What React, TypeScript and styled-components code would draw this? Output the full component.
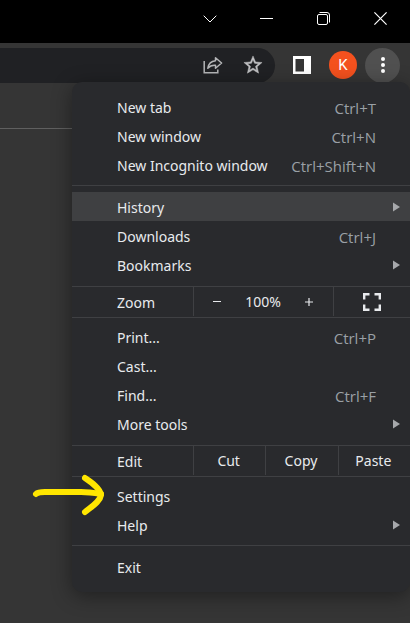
import React from "react";
import styled, { createGlobalStyle } from "styled-components";

const line = "#3f4043";

const Global = createGlobalStyle`
  *, *::before, *::after { box-sizing: border-box; }
  html, body, #root { height: 100%; }
  body {
    margin: 0;
    overflow: hidden;
    background: #353535;
    color: #e8eaed;
    font-family: "Noto Sans", "Open Sans", sans-serif;
    font-size: 14px;
  }
  button {
    margin: 0;
    padding: 0;
    border: 0;
    background: none;
    color: inherit;
    font: inherit;
  }
  svg { display: block; }
`;

const Window = styled.div`
  position: relative;
  min-height: 100%;
  overflow: hidden;
`;

const TitleBar = styled.header`
  display: flex;
  justify-content: flex-end;
  height: 43px;
  padding: 0 1px 6px 0;
  background: #000;
`;

const CaptionButton = styled.button`
  display: grid;
  place-items: center;
  width: 57px;
  color: #fff;
`;

const Toolbar = styled.div`
  display: flex;
  align-items: center;
  height: 44px;
  padding-right: 10px;
`;

const AddressBar = styled.div`
  display: flex;
  flex: 1;
  align-items: center;
  justify-content: flex-end;
  gap: 20px;
  height: 35px;
  padding-right: 12px;
  border-radius: 0 18px 18px 0;
  background: #202124;
`;

const ToolButton = styled.button`
  display: grid;
  place-items: center;
  width: 20px;
  height: 20px;
`;

const PanelButton = styled(ToolButton)`
  margin-left: 17px;
`;

const Avatar = styled.button`
  width: 28px;
  height: 28px;
  margin: 0 8px 0 17px;
  border-radius: 50%;
  background: #f4511e;
  color: #fff;
  font-family: Roboto, sans-serif;
  font-size: 15px;
`;

const MenuButton = styled.button`
  display: grid;
  place-items: center;
  width: 35px;
  height: 35px;
  border-radius: 50%;
  background: #505050;
`;

const PageRule = styled.hr`
  height: 1px;
  margin: 41px 0 0;
  border: 0;
  background: #606060;
`;

const Menu = styled.nav`
  position: absolute;
  top: 82px;
  right: 0;
  left: 72px;
  padding: 10px 0 11px;
  border-radius: 10px;
  background: #292a2d;
  box-shadow: 0 4px 20px rgba(0, 0, 0, 0.4);
`;

const Group = styled.div<{ $top?: number; $bottom?: number }>`
  padding: ${({ $top = 0, $bottom = 0 }) => `${$top}px 0 ${$bottom}px`};
  & + & { border-top: 1px solid ${line}; }
`;

const Item = styled.button<{ $active?: boolean }>`
  display: flex;
  align-items: center;
  justify-content: space-between;
  width: 100%;
  height: 29px;
  padding: 0 10px 0 45px;
  background: ${({ $active }) => ($active ? "#3f4042" : "transparent")};
  text-align: left;
  line-height: 20px;
  white-space: nowrap;
`;

const ItemLabel = styled.span`
  padding-top: 2px;
`;

const Shortcut = styled.span`
  margin-right: 24px;
  padding-top: 2px;
  color: #9aa0a6;
  font-family: "Open Sans", "Noto Sans", sans-serif;
  font-size: 15px;
`;

const SplitRow = styled.div`
  display: flex;
  height: 30px;
`;

const RowLabel = styled.span`
  width: 121px;
  padding-left: 45px;
  line-height: 31px;
`;

const Cell = styled.button`
  flex: 1 0 auto;
  width: 72px;
  height: 29px;
  padding-right: 2px;
  border-left: 1px solid ${line};
`;

const ZoomControls = styled.div`
  display: flex;
  flex: 1;
  align-items: center;
  justify-content: space-between;
  height: 29px;
  padding: 0 18px 0 17px;
  border-left: 1px solid ${line};
`;

const StepButton = styled.button`
  display: grid;
  place-items: center;
  width: 12px;
  height: 29px;
`;

const FullscreenButton = styled.button`
  display: grid;
  place-items: center;
  width: 77px;
  height: 29px;
  border-left: 1px solid ${line};
`;

const Pointer = styled.svg`
  position: absolute;
  top: 472px;
  left: 30px;
`;

type Entry = { label: string; keys?: string; submenu?: boolean; active?: boolean };

const Arrow = () => (
  <svg width="8" height="10" viewBox="0 0 8 10" aria-hidden="true">
    <path d="M1 0.5v9L8 5z" fill="#a6a8ab" />
  </svg>
);

const Items = ({ entries }: { entries: Entry[] }) => (
  <>
    {entries.map(({ label, keys, submenu, active }) => (
      <Item key={label} $active={active} aria-haspopup={submenu ? "menu" : undefined}>
        <ItemLabel>{label}</ItemLabel>
        {keys && <Shortcut>{keys}</Shortcut>}
        {submenu && <Arrow />}
      </Item>
    ))}
  </>
);

export default function App() {
  return (
    <>
      <Global />
      <Window>
        <TitleBar>
          <CaptionButton aria-label="Search tabs">
            <svg width="14" height="8" viewBox="0 0 14 8" fill="none" stroke="currentColor">
              <path d="M0.7 0.7 7 7l6.3-6.3" />
            </svg>
          </CaptionButton>
          <CaptionButton aria-label="Minimize">
            <svg width="13" height="1" viewBox="0 0 13 1">
              <path d="M0 0h13v1H0z" fill="currentColor" />
            </svg>
          </CaptionButton>
          <CaptionButton aria-label="Restore">
            <svg width="13" height="13" viewBox="0 0 13 13" fill="none" stroke="currentColor">
              <rect x="0.5" y="2.5" width="10" height="10" rx="1.5" />
              <path d="M2.5 0.5h7.5a2.5 2.5 0 0 1 2.5 2.5v7.5" />
            </svg>
          </CaptionButton>
          <CaptionButton aria-label="Close">
            <svg width="13" height="13" viewBox="0 0 13 13" stroke="currentColor" strokeWidth="1.2">
              <path d="m0.4 0.4 12.2 12.2M12.6 0.4 0.4 12.6" />
            </svg>
          </CaptionButton>
        </TitleBar>

        <Toolbar>
          <AddressBar>
            <ToolButton aria-label="Share">
              <svg width="20" height="18" viewBox="0 0 20 18" fill="none" stroke="#b4b5b7" strokeWidth="1.5">
                <path d="M1.2 5v11.8h13.6V13.5" />
                <path d="M12.5 1.8 18.6 7l-6.1 5.2V9.3C9 9 6.8 10 4.8 12.3 5.500 8 8 5.200 12.5 4.800z" strokeLinejoin="round" />
              </svg>
            </ToolButton>
            <ToolButton aria-label="Bookmark this tab">
              <svg width="20" height="20" viewBox="1 1 22 22" fill="#c0c1c3" stroke="#c0c1c3" strokeWidth="0.5">
                <path d="m22 9.24-7.19-.62L12 2 9.19 8.63 2 9.24l5.46 4.73L5.82 21 12 17.27 18.18 21l-1.63-7.03L22 9.24zM12 15.4l-3.76 2.27 1-4.28-3.32-2.88 4.38-.38L12 6.1l1.71 4.04 4.38.38-3.32 2.88 1 4.28L12 15.4z" />
              </svg>
            </ToolButton>
          </AddressBar>
          <PanelButton aria-label="Side panel">
            <svg width="18" height="18" viewBox="0 0 18 18">
              <path d="M0 0h18v18H0zM2.5 3v12.5h8.5V3z" fill="#fff" fillRule="evenodd" />
            </svg>
          </PanelButton>
          <Avatar aria-label="Profile K">K</Avatar>
          <MenuButton aria-label="Customize and control" aria-expanded="true">
            <svg width="4" height="18" viewBox="0 0 4 18" fill="#fff">
              <circle cx="2" cy="3" r="2" />
              <circle cx="2" cy="9" r="2" />
              <circle cx="2" cy="15" r="2" />
            </svg>
          </MenuButton>
        </Toolbar>
        <PageRule />

        <Menu aria-label="Browser menu">
          <Group $bottom={6}>
            <Items
              entries={[
                { label: "New tab", keys: "Ctrl+T" },
                { label: "New window", keys: "Ctrl+N" },
                { label: "New Incognito window", keys: "Ctrl+Shift+N" },
              ]}
            />
          </Group>
          <Group $top={6} $bottom={7}>
            <Items
              entries={[
                { label: "History", submenu: true, active: true },
                { label: "Downloads", keys: "Ctrl+J" },
                { label: "Bookmarks", submenu: true },
              ]}
            />
          </Group>
          <Group>
            <SplitRow>
              <RowLabel>Zoom</RowLabel>
              <ZoomControls>
                <StepButton aria-label="Zoom out">
                  <svg width="8" height="9" viewBox="0 0 8 9">
                    <path d="M0 4h8v1H0z" fill="currentColor" />
                  </svg>
                </StepButton>
                <span>100%</span>
                <StepButton aria-label="Zoom in">
                  <svg width="8" height="8" viewBox="0 0 8 8" stroke="currentColor" strokeWidth="1.2">
                    <path d="M0 4h8M4 0v8" />
                  </svg>
                </StepButton>
              </ZoomControls>
              <FullscreenButton aria-label="Full screen">
                <svg width="18" height="18" viewBox="0 0 18 18" fill="none" stroke="#e8eaed" strokeWidth="2.4">
                  <path d="M1.2 6.5V1.2h5.3M11.5 1.2h5.3v5.3M16.8 11.5v5.3h-5.3M6.5 16.8H1.2v-5.3" />
                </svg>
              </FullscreenButton>
            </SplitRow>
          </Group>
          <Group $top={4} $bottom={7}>
            <Items
              entries={[
                { label: "Print...", keys: "Ctrl+P" },
                { label: "Cast..." },
                { label: "Find...", keys: "Ctrl+F" },
                { label: "More tools", submenu: true },
              ]}
            />
          </Group>
          <Group>
            <SplitRow>
              <RowLabel>Edit</RowLabel>
              <Cell>Cut</Cell>
              <Cell>Copy</Cell>
              <Cell>Paste</Cell>
            </SplitRow>
          </Group>
          <Group $top={4} $bottom={6}>
            <Items entries={[{ label: "Settings" }, { label: "Help", submenu: true }]} />
          </Group>
          <Group $top={6}>
            <Items entries={[{ label: "Exit" }]} />
          </Group>
        </Menu>

        <Pointer
          width="80"
          height="46"
          viewBox="0 0 80 46"
          fill="none"
          stroke="#ffe600"
          strokeWidth="6"
          strokeLinecap="round"
          strokeLinejoin="round"
          aria-hidden="true"
        >
          <path d="M6 22C8 20 11 20 15 20h36c8 0 14 1 20 2" />
          <path d="M55 6c6 4 15 10 16 17-1 7-10 12-16 17" />
        </Pointer>
      </Window>
    </>
  );
}
